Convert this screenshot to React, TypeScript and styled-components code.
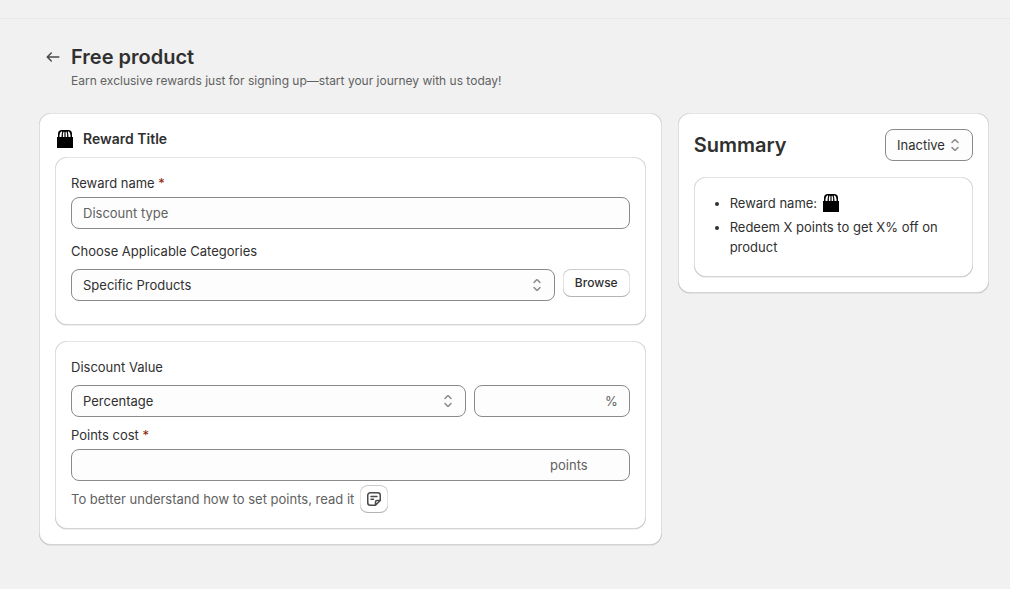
import React from 'react';
import styled, { createGlobalStyle } from 'styled-components';

const GlobalStyle = createGlobalStyle`
  *, *::before, *::after { box-sizing: border-box; }
  body {
    margin: 0;
    background: #f1f1f1;
    color: #303030;
    font-family: Inter, "Liberation Sans", sans-serif;
    font-size: 13px;
    font-weight: 400;
    line-height: 20px;
  }
  h1, h2, p, ul { margin: 0; }
  button, input, select { font: inherit; color: inherit; }
`;

const TopBar = styled.header`
  height: 19px;
  border-bottom: 1px solid #e8e8e8;
`;

const Page = styled.main`
  padding: 26px 21px 44px 39px;
`;

const PageHeader = styled.div`
  display: flex;
  align-items: flex-start;
  gap: 4px;
  margin-bottom: 20px;
`;

const BackLink = styled.a`
  display: flex;
  padding: 2px 4px;
  color: #4a4a4a;
`;

const PageTitle = styled.h1`
  font-size: 20px;
  line-height: 24px;
  font-weight: 600;
`;

const Subtitle = styled.p`
  font-size: 12px;
  line-height: 24px;
  color: #616161;
`;

const Columns = styled.div`
  display: grid;
  grid-template-columns: minmax(0, 2fr) minmax(0, 1fr);
  align-items: start;
  gap: 16px;
`;

const Card = styled.section`
  position: relative;
  display: flex;
  flex-direction: column;
  padding: 16px;
  background: #fff;
  border-radius: 12px;
  box-shadow: 0 1px 0 rgba(26, 26, 26, 0.07);

  &::before {
    content: '';
    position: absolute;
    inset: 0;
    border-radius: inherit;
    pointer-events: none;
    box-shadow: inset 1px 0 0 rgba(0, 0, 0, 0.13), inset -1px 0 0 rgba(0, 0, 0, 0.13),
      inset 0 -1px 0 rgba(0, 0, 0, 0.17), inset 0 1px 0 rgba(204, 204, 204, 0.5);
  }
`;

const OuterCard = styled(Card)`
  gap: 16px;
`;

const CardHeader = styled.div`
  display: flex;
  align-items: center;
  gap: 8px;
  height: 20px;
`;

const CardTitle = styled.h2`
  font-size: 14px;
  line-height: 20px;
  font-weight: 600;
`;

const SummaryHeader = styled.div`
  display: flex;
  align-items: center;
  justify-content: space-between;
`;

const SummaryTitle = styled.h2`
  font-size: 20px;
  line-height: 24px;
  font-weight: 600;
`;

const Stack = styled.div`
  display: flex;
  flex-direction: column;
  gap: 16px;
  margin-top: -8px;
`;

const Label = styled.label<{ $gap?: number }>`
  margin-bottom: ${(p) => p.$gap ?? 4}px;
`;

const Required = styled.span`
  color: #8e1f0b;
`;

const Row = styled.div<{ $after: number }>`
  display: flex;
  align-items: flex-start;
  gap: 8px;
  margin-bottom: ${(p) => p.$after}px;
`;

const Field = styled.div<{ $width?: number }>`
  display: flex;
  align-items: center;
  position: relative;
  height: 32px;
  min-width: 0;
  ${(p) => (p.$width ? `flex: 0 0 ${p.$width}px;` : 'flex: 1 1 auto;')}
  background: #fdfdfd;
  border: 1px solid #8a8a8a;
  border-radius: 8px;
`;

const TextInput = styled.input`
  flex: 1;
  min-width: 0;
  height: 30px;
  padding: 0 11px;
  border: 0;
  background: none;
  outline: none;

  &::placeholder { color: #616161; opacity: 1; }
`;

const Suffix = styled.span<{ $space: number }>`
  color: #616161;
  margin-right: ${(p) => p.$space}px;
`;

const SelectInput = styled.select`
  appearance: none;
  width: 100%;
  height: 30px;
  padding: 0 24px 0 11px;
  border: 0;
  border-radius: 8px;
  background: none;
  outline: none;
`;

const SelectArrows = styled.svg`
  position: absolute;
  right: 7px;
  pointer-events: none;
  fill: #8a8a8a;
`;

const Button = styled.button<{ $icon?: boolean }>`
  display: inline-flex;
  align-items: center;
  justify-content: center;
  flex: none;
  height: 28px;
  padding: ${(p) => (p.$icon ? '4px' : '0 12px')};
  border: 0;
  border-radius: 8px;
  background: #fff;
  font-size: 12px;
  line-height: 16px;
  font-weight: 550;
  box-shadow: inset 0 -1px 0 #b5b5b5, inset 0 0 0 1px rgba(0, 0, 0, 0.1), inset 0 1px 0 #e3e3e3;
`;

const Help = styled.div`
  display: flex;
  align-items: center;
  gap: 6px;
  color: #616161;
`;

const List = styled.ul`
  display: flex;
  flex-direction: column;
  gap: 4px;
  padding: 0 0 4px 20px;
`;

const InlineBag = styled.span`
  display: inline-flex;
  vertical-align: top;
`;

function Bag() {
  return (
    <svg width="20" height="20" viewBox="0 0 20 20" aria-hidden="true">
      <path d="M2 8h16v11H2z" />
      <path d="M3 8.500V5Q3 1 7 1h6Q17 1 17 5V8.500z" />
      <path
        d="M4.500 8V6Q4.700 3.500 6.600 2.300L7.200 3Q6.500 5 6.500 8zM7.900 8V5Q8 3.500 8.800 2.400L9.400 3V8zM10.600 8V3L11.200 2.400Q12 3.500 12.100 5V8zM13.500 8Q13.500 5 12.800 3L13.400 2.300Q15.300 3.500 15.500 6V8z"
        fill="#fff"
      />
    </svg>
  );
}

function Arrows() {
  return (
    <SelectArrows width="20" height="20" viewBox="0 0 20 20" aria-hidden="true">
      <path d="M10.884 4.323a1.250 1.250 0 0 0-1.768 0l-2.646 2.647a.75.75 0 0 0 1.060 1.060l2.470-2.470 2.470 2.470a.75.75 0 1 0 1.060-1.060l-2.646-2.647Z" />
      <path d="m13.530 13.030-2.646 2.647a1.250 1.250 0 0 1-1.768 0l-2.646-2.647a.75.75 0 0 1 1.060-1.060l2.470 2.470 2.470-2.470a.75.75 0 0 1 1.060 1.060Z" />
    </SelectArrows>
  );
}

export default function App() {
  return (
    <>
      <GlobalStyle />
      <TopBar />
      <Page>
        <PageHeader>
          <BackLink href="#" aria-label="Back">
            <svg width="20" height="20" viewBox="0 0 20 20" fill="currentColor" aria-hidden="true">
              <path d="M16.500 10a.75.75 0 0 1-.75.75h-9.690l2.720 2.720a.75.75 0 0 1-1.060 1.060l-4-4a.75.75 0 0 1 0-1.060l4-4a.75.75 0 1 1 1.060 1.060l-2.720 2.720h9.690a.75.75 0 0 1 .75.75Z" />
            </svg>
          </BackLink>
          <div>
            <PageTitle>Free product</PageTitle>
            <Subtitle>Earn exclusive rewards just for signing up—start your journey with us today!</Subtitle>
          </div>
        </PageHeader>

        <Columns>
          <OuterCard>
            <CardHeader>
              <Bag />
              <CardTitle>Reward Title</CardTitle>
            </CardHeader>
            <Stack>
              <Card>
                <Label htmlFor="reward-name">
                  Reward name <Required>*</Required>
                </Label>
                <Row $after={12}>
                  <Field>
                    <TextInput id="reward-name" placeholder="Discount type" />
                  </Field>
                </Row>
                <Label htmlFor="categories" $gap={8}>Choose Applicable Categories</Label>
                <Row $after={8}>
                  <Field>
                    <SelectInput id="categories">
                      <option>Specific Products</option>
                    </SelectInput>
                    <Arrows />
                  </Field>
                  <Button type="button">Browse</Button>
                </Row>
              </Card>

              <Card>
                <Label htmlFor="discount-kind" $gap={8}>Discount Value</Label>
                <Row $after={8}>
                  <Field>
                    <SelectInput id="discount-kind">
                      <option>Percentage</option>
                    </SelectInput>
                    <Arrows />
                  </Field>
                  <Field $width={156}>
                    <TextInput aria-label="Discount value" />
                    <Suffix $space={11}>%</Suffix>
                  </Field>
                </Row>
                <Label htmlFor="points-cost">
                  Points cost <Required>*</Required>
                </Label>
                <Row $after={4}>
                  <Field>
                    <TextInput id="points-cost" />
                    <Suffix $space={41}>points</Suffix>
                  </Field>
                </Row>
                <Help>
                  To better understand how to set points, read it
                  <Button type="button" $icon aria-label="Read the points guide">
                    <svg width="20" height="20" viewBox="0 0 20 20" fill="none" stroke="#4a4a4a" strokeWidth="1.500" strokeLinecap="round" strokeLinejoin="round" aria-hidden="true">
                      <path d="M11.500 16.250H6.250a2.500 2.500 0 0 1-2.500-2.500v-7.500a2.500 2.500 0 0 1 2.500-2.500h7.500a2.500 2.500 0 0 1 2.500 2.500v5.250L11.500 16.250V13a1.500 1.500 0 0 1 1.500-1.500h3.250M7 7.500h6M7 10.250h2.500" />
                    </svg>
                  </Button>
                </Help>
              </Card>
            </Stack>
          </OuterCard>

          <OuterCard>
            <SummaryHeader>
              <SummaryTitle>Summary</SummaryTitle>
              <Field $width={88}>
                <SelectInput aria-label="Status">
                  <option>Inactive</option>
                </SelectInput>
                <Arrows />
              </Field>
            </SummaryHeader>
            <Card>
              <List>
                <li>
                  Reward name: <InlineBag><Bag /></InlineBag>
                </li>
                <li>Redeem X points to get X% off on product</li>
              </List>
            </Card>
          </OuterCard>
        </Columns>
      </Page>
    </>
  );
}
